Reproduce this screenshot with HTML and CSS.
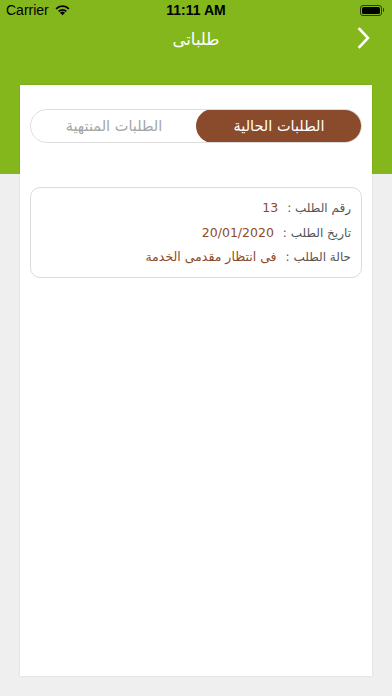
FILE: index.html
```html
<!DOCTYPE html>
<html lang="ar">
<head>
<meta charset="utf-8">
<link rel="stylesheet" href="styles.css">
</head>
<body>
<div class="screen">
  <header class="top">
    <div class="status">
      <div class="carrier">Carrier
        <svg class="wifi" width="17" height="12" viewBox="0 0 16 11"><path d="M8 10.5 L5.6 8 A3.4 3.4 0 0 1 10.4 8 Z" fill="#000"/><path d="M3.8 6.2 A6 6 0 0 1 12.2 6.2 L11 7.4 A4.3 4.3 0 0 0 5 7.4 Z" fill="#000"/><path d="M1.4 3.8 A9.4 9.4 0 0 1 14.6 3.8 L13.4 5 A7.7 7.7 0 0 0 2.6 5 Z" fill="#000"/></svg>
      </div>
      <div class="time">11:11 AM</div>
      <div class="battery"><span class="batt-body"><span class="batt-fill"></span></span><span class="batt-tip"></span></div>
    </div>
    <nav class="navbar">
      <span class="title">طلباتى</span>
      <svg class="chev" width="14" height="22" viewBox="0 0 14 22"><path d="M2.5 2 L11 11 L2.5 20" fill="none" stroke="#fff" stroke-width="2.6" stroke-linecap="square"/></svg>
    </nav>
  </header>
  <main class="panel">
    <div class="segments">
      <div class="seg active">الطلبات الحالية</div>
      <div class="seg">الطلبات المنتهية</div>
    </div>
    <div class="order">
      <div class="row"><span class="label">رقم الطلب :</span><span class="value">13</span></div>
      <div class="row"><span class="label">تاريخ الطلب :</span><span class="value">20/01/2020</span></div>
      <div class="row"><span class="label">حالة الطلب :</span><span class="value">فى انتظار مقدمى الخدمة</span></div>
    </div>
  </main>
</div>
</body>
</html>
```
FILE: styles.css
```css
* { box-sizing: border-box; }
html, body { margin: 0; padding: 0; }
body {
  width: 392px;
  height: 696px;
  background: #efefef;
  font-family: "DejaVu Sans", "Noto Sans", sans-serif;
  overflow: hidden;
}
.screen { position: relative; width: 392px; height: 696px; }
.top {
  background: #84b71b;
  height: 174px;
}
.status {
  height: 20px;
  display: flex;
  align-items: center;
  justify-content: space-between;
  padding: 0 8px 0 6px;
  font-family: "Liberation Sans", Arial, sans-serif;
  font-size: 14px;
  color: #000;
  position: relative;
}
.carrier { display: flex; align-items: center; gap: 5px; }
.wifi { margin-top: -1px; }
.time {
  position: absolute;
  left: 0; right: 0;
  text-align: center;
  font-weight: bold;
  font-size: 14px;
  pointer-events: none;
}
.battery { display: flex; align-items: center; }
.batt-body {
  width: 22px; height: 11px;
  border: 1px solid #2a3a05;
  border-radius: 3px;
  padding: 1px;
  display: flex;
}
.batt-fill { flex: 1; background: #000; border-radius: 1.5px; }
.batt-tip { width: 1.5px; height: 4px; background: #2a3a05; margin-left: 1px; border-radius: 0 1px 1px 0; }
.navbar {
  height: 44px;
  display: flex;
  align-items: center;
  justify-content: center;
  position: relative;
}
.title {
  color: #fff;
  font-size: 16.5px;
  margin-top: -5px;
}
.chev {
  position: absolute;
  right: 21px;
  top: 7px;
}
.panel {
  position: absolute;
  left: 20px;
  top: 85px;
  width: 352px;
  height: 591px;
  background: #fff;
  box-shadow: 0 0 1.5px rgba(0,0,0,0.15);
  padding: 24px 10px 0 10px;
  direction: rtl;
}
.segments {
  display: flex;
  height: 34px;
  border: 1px solid #dedede;
  border-radius: 17px;
  overflow: hidden;
}
.seg {
  flex: 1;
  display: flex;
  align-items: center;
  justify-content: center;
  font-size: 14.5px;
  color: #a5a5a5;
}
.seg.active {
  background: #8a4b2c;
  color: #fff;
  border-radius: 17px;
  margin: -1px;
}
.order {
  margin-top: 44px;
  border: 1px solid #dcdcdc;
  border-radius: 10px;
  height: 91px;
  padding: 11px 10px 0 10px;
  display: flex;
  flex-direction: column;
  gap: 6.5px;
}
.row {
  display: flex;
  gap: 9px;
  font-size: 12.5px;
  line-height: 18px;
}
.label { color: #555; font-size: 12px; }
.value { color: #8a4b2c; }
```
